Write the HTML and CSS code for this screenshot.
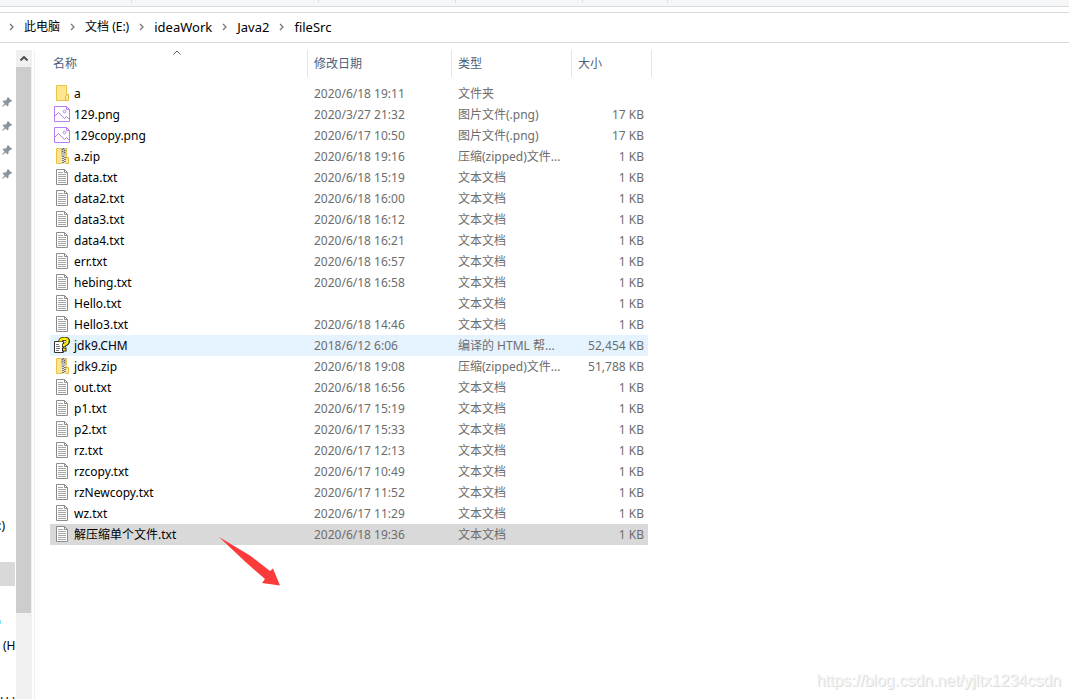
FILE: index.html
```html
<!DOCTYPE html>
<html lang="zh-CN">
<head>
<meta charset="utf-8">
<title>fileSrc</title>
<link rel="stylesheet" href="styles.css">
</head>
<body>
<svg class="defs" aria-hidden="true">
  <symbol id="i-folder" viewBox="0 0 16 16"><path d="M2.500 .5h10v15h-10z" fill="#ffe68f" stroke="#e8c24b"/><path d="M12.500 9.500h2v6h-3v-4z" fill="#ffe9a0" stroke="#e3b93c"/></symbol>
  <symbol id="i-png" viewBox="0 0 16 16"><path d="M.5 .5h12l3 3v12H.5z" fill="#fff" stroke="#b77df5"/><path d="M12.500 .5v3h3" fill="none" stroke="#b77df5"/><circle cx="10.500" cy="5.500" r="1.300" fill="none" stroke="#b77df5"/><path d="M.5 10.500l4-4 6 6 2-2 3 3" fill="none" stroke="#b77df5"/></symbol>
  <symbol id="i-zip" viewBox="0 0 16 16"><path d="M2.500 .5h10v15h-10z" fill="#ffe38a" stroke="#e8c24b"/><path d="M12.500 9.500h2v6h-3v-4z" fill="#ffe9a0" stroke="#e3b93c"/><path d="M7 0h5v6l-1 2H8L7 6z" fill="#b9bec2"/><path d="M9 0h1v1H9zM8 1h1v1H8zM10 2h1v1h-1zM8 3h1v1H8zM10 4h1v1h-1z" fill="#555"/><path d="M8 8h4v8H8z" fill="#e8e4d2"/><path d="M8 8h2v1H8zM10 9h2v1h-2zM8 10h2v1H8zM10 11h2v1h-2zM8 12h2v1H8zM10 13h2v1h-2zM8 14h2v1H8z" fill="#777"/></symbol>
  <symbol id="i-txt" viewBox="0 0 16 16"><path d="M2.500 .5h8l3 3v12h-11z" fill="#fff" stroke="#8c8c8c"/><path d="M10.500 .5v3h3" fill="none" stroke="#8c8c8c"/><path d="M4 3.500h5M4 5.500h8M4 7.500h8M4 9.500h8M4 11.500h8M4 13.500h8" stroke="#a6a6a6"/></symbol>
  <symbol id="i-chm" viewBox="0 0 16 16"><path d="M.5 4.500h9v11h-9z" fill="#fff" stroke="#333"/><path d="M2 7.500h3M2 9.500h4M2 11.500h4M2 13.500h3" stroke="#777"/><path d="M6.500 5V3.500Q7 1.800 10.500 1.800T14 4.500Q14 6.300 10 8v2" fill="none" stroke="#222" stroke-width="4"/><path d="M8 10.500h4.500v4H8z" fill="#222"/><path d="M6.500 4.500V3.500Q7 1.800 10.500 1.800T13.500 4.500Q13.500 6.300 10 8v1.500" fill="none" stroke="#ffef00" stroke-width="2.500"/><path d="M9 11.500h2.500v2H9z" fill="#ffef00"/></symbol>
  <symbol id="i-pin" viewBox="0 0 10 10"><path d="M6 0l4 4-1 1H8L6.500 6.500v2l-1 1L3.500 7.500.5 10 0 9.500 2.500 6.500.5 4.500l1-1h2L5 2V1z" fill="#8a959d"/></symbol>
  <symbol id="i-next" viewBox="0 0 5 8"><path d="M1 1l3 3-3 3" fill="none" stroke="#777" stroke-width="1.300"/></symbol>
  <symbol id="i-up" viewBox="0 0 8 5"><path d="M.5 4.500L4 1l3.500 3.500" fill="none" stroke="currentColor"/></symbol>
</svg>
<div class="columns-edge"><i class="c1"></i><i class="c2"></i><i class="c3"></i><i class="c4"></i><i class="c5"></i></div>
<nav class="address">
  <svg class="next"><use href="#i-next"/></svg><a href="#">此电脑</a>
  <svg class="next"><use href="#i-next"/></svg><a href="#">文档 (E:)</a>
  <svg class="next"><use href="#i-next"/></svg><a href="#" class="latin">ideaWork</a>
  <svg class="next"><use href="#i-next"/></svg><a href="#" class="latin">Java2</a>
  <svg class="next"><use href="#i-next"/></svg><a href="#" class="latin">fileSrc</a>
</nav>
<div class="main">
  <aside class="tree">
    <ul class="pins">
      <li><svg class="pin"><use href="#i-pin"/></svg></li>
      <li><svg class="pin"><use href="#i-pin"/></svg></li>
      <li><svg class="pin"><use href="#i-pin"/></svg></li>
      <li><svg class="pin"><use href="#i-pin"/></svg></li>
    </ul>
    <ul class="drives">
      <li class="tail colon">:)</li>
      <li></li>
      <li class="current"></li>
      <li></li>
      <li><i class="dot"></i></li>
      <li class="tail label">(H</li>
      <li></li>
      <li class="tail last">H:)</li>
    </ul>
  </aside>
  <div class="scrollbar"><button class="up" aria-label="向上滚动"><svg class="arrow"><use href="#i-up"/></svg></button><div class="thumb"></div></div>
  <main class="files">
    <table>
      <colgroup><col class="w-name"><col class="w-date"><col class="w-type"><col class="w-size"><col class="w-end"></colgroup>
      <thead><tr><th class="sorted">名称<svg class="sort"><use href="#i-up"/></svg></th><th>修改日期</th><th>类型</th><th colspan="2">大小</th></tr></thead>
      <tbody>
        <tr class="gap"><td colspan="5"></td></tr>
        <tr><td><span class="file"><svg><use href="#i-folder"/></svg>a</span></td><td>2020/6/18 19:11</td><td>文件夹</td><td></td></tr>
        <tr><td><span class="file"><svg><use href="#i-png"/></svg>129.png</span></td><td>2020/3/27 21:32</td><td>图片文件(.png)</td><td>17 KB</td></tr>
        <tr><td><span class="file"><svg><use href="#i-png"/></svg>129copy.png</span></td><td>2020/6/17 10:50</td><td>图片文件(.png)</td><td>17 KB</td></tr>
        <tr><td><span class="file"><svg><use href="#i-zip"/></svg>a.zip</span></td><td>2020/6/18 19:16</td><td>压缩(zipped)文件...</td><td>1 KB</td></tr>
        <tr><td><span class="file"><svg><use href="#i-txt"/></svg>data.txt</span></td><td>2020/6/18 15:19</td><td>文本文档</td><td>1 KB</td></tr>
        <tr><td><span class="file"><svg><use href="#i-txt"/></svg>data2.txt</span></td><td>2020/6/18 16:00</td><td>文本文档</td><td>1 KB</td></tr>
        <tr><td><span class="file"><svg><use href="#i-txt"/></svg>data3.txt</span></td><td>2020/6/18 16:12</td><td>文本文档</td><td>1 KB</td></tr>
        <tr><td><span class="file"><svg><use href="#i-txt"/></svg>data4.txt</span></td><td>2020/6/18 16:21</td><td>文本文档</td><td>1 KB</td></tr>
        <tr><td><span class="file"><svg><use href="#i-txt"/></svg>err.txt</span></td><td>2020/6/18 16:57</td><td>文本文档</td><td>1 KB</td></tr>
        <tr><td><span class="file"><svg><use href="#i-txt"/></svg>hebing.txt</span></td><td>2020/6/18 16:58</td><td>文本文档</td><td>1 KB</td></tr>
        <tr><td><span class="file"><svg><use href="#i-txt"/></svg>Hello.txt</span></td><td></td><td>文本文档</td><td>1 KB</td></tr>
        <tr><td><span class="file"><svg><use href="#i-txt"/></svg>Hello3.txt</span></td><td>2020/6/18 14:46</td><td>文本文档</td><td>1 KB</td></tr>
        <tr class="hover"><td><span class="file"><svg><use href="#i-chm"/></svg>jdk9.CHM</span></td><td>2018/6/12 6:06</td><td>编译的 HTML 帮...</td><td>52,454 KB</td></tr>
        <tr><td><span class="file"><svg><use href="#i-zip"/></svg>jdk9.zip</span></td><td>2020/6/18 19:08</td><td>压缩(zipped)文件...</td><td>51,788 KB</td></tr>
        <tr><td><span class="file"><svg><use href="#i-txt"/></svg>out.txt</span></td><td>2020/6/18 16:56</td><td>文本文档</td><td>1 KB</td></tr>
        <tr><td><span class="file"><svg><use href="#i-txt"/></svg>p1.txt</span></td><td>2020/6/17 15:19</td><td>文本文档</td><td>1 KB</td></tr>
        <tr><td><span class="file"><svg><use href="#i-txt"/></svg>p2.txt</span></td><td>2020/6/17 15:33</td><td>文本文档</td><td>1 KB</td></tr>
        <tr><td><span class="file"><svg><use href="#i-txt"/></svg>rz.txt</span></td><td>2020/6/17 12:13</td><td>文本文档</td><td>1 KB</td></tr>
        <tr><td><span class="file"><svg><use href="#i-txt"/></svg>rzcopy.txt</span></td><td>2020/6/17 10:49</td><td>文本文档</td><td>1 KB</td></tr>
        <tr><td><span class="file"><svg><use href="#i-txt"/></svg>rzNewcopy.txt</span></td><td>2020/6/17 11:52</td><td>文本文档</td><td>1 KB</td></tr>
        <tr><td><span class="file"><svg><use href="#i-txt"/></svg>wz.txt</span></td><td>2020/6/17 11:29</td><td>文本文档</td><td>1 KB</td></tr>
        <tr class="selected"><td><span class="file"><svg><use href="#i-txt"/></svg>解压缩单个文件.txt</span></td><td>2020/6/18 19:36</td><td>文本文档</td><td>1 KB</td></tr>
      </tbody>
    </table>
  </main>
</div>
<svg class="pointer" viewBox="0 0 62 50" aria-hidden="true"><path d="M0 0L31 18.500L51 34L54 31.500L61 48.500L43 46L46 42L26 24.500Z" fill="#fb3b39"/></svg>
<div class="watermark">https://blog.csdn.net/yjltx1234csdn</div>
</body>
</html>
```
FILE: styles.css
```css
* { box-sizing: border-box; }
body {
  margin: 0;
  height: 100vh;
  overflow: hidden;
  position: relative;
  display: flex;
  flex-direction: column;
  background: #fff;
  color: #000;
  font: 12px/20px "Noto Sans", "Noto Sans CJK SC", sans-serif;
}
ul { list-style: none; margin: 0; padding: 0; }
a { color: inherit; text-decoration: none; }
svg { display: block; flex: none; }
.defs { position: absolute; width: 0; height: 0; }

.columns-edge {
  display: flex;
  flex: none;
  height: 7px;
  background: #f5f6f7;
  border-bottom: 1px solid #dadada;
}
.columns-edge i { height: 3px; border-right: 1px solid #dfe0e1; }
.c1 { width: 132px; }
.c2 { width: 187px; }
.c3 { width: 137px; }
.c4 { width: 127px; }
.c5 { width: 85px; }

.address {
  flex: none;
  display: flex;
  align-items: center;
  gap: 10px;
  height: 31px;
  margin-top: 5px;
  padding: 0 0 2px 9px;
  border: solid #d9d9d9;
  border-width: 1px 0;
}
.latin { font-size: 13px; }
.next { width: 5px; height: 8px; }

.main { flex: 1; min-height: 0; display: flex; }
.tree { width: 16px; overflow: hidden; padding-top: 47px; }
.tree li { height: 24px; display: flex; align-items: center; }
.tree .pin { width: 10px; height: 10px; margin-left: 2px; }
.drives { margin-top: 328px; }
.drives .current { background: #d9d9d9; margin-right: 1px; }
.drives .colon { justify-content: flex-end; padding-right: 11px; }
.drives .label { padding-left: 3px; }
.drives .last { padding-top: 16px; }
.tail { white-space: nowrap; }
.dot { width: 1px; height: 4px; background: #7fe3fa; }

.scrollbar { width: 16px; margin-top: 7px; background: #f0f0f0; }
.up {
  width: 15px;
  height: 17px;
  padding: 0;
  border: 0;
  background: none;
  color: #505050;
  display: grid;
  place-items: center;
}
.arrow { width: 8px; height: 5px; stroke-width: 2; }
.thumb { width: 15px; height: 546px; background: #cdcdcd; }

.files { flex: 1; margin: 7px 0 0 2px; padding-left: 15px; border-left: 1px solid #f0f0f0; }
table { table-layout: fixed; width: 602px; border-collapse: separate; border-spacing: 0; }
.w-name { width: 258px; }
.w-date { width: 144px; }
.w-type { width: 120px; }
.w-size { width: 76px; }
.w-end { width: 4px; }
th {
  position: relative;
  height: 27px;
  padding: 0 0 0 6px;
  border-right: 1px solid #e5e5e5;
  color: #4c607a;
  font-weight: 400;
  text-align: left;
}
.sorted { padding-left: 3px; }
.sort { position: absolute; top: 0; left: 123px; width: 8px; height: 5px; color: #666; }
.gap td { height: 6px; }
td { height: 21px; padding: 0 0 0 6px; color: #6d6d6d; white-space: nowrap; }
td:first-child { padding-left: 4px; color: #000; }
td:nth-child(4) { padding: 0 4px 0 0; text-align: right; }
.file { display: flex; align-items: center; gap: 4px; }
.file svg { width: 16px; height: 16px; margin-bottom: 2px; }
.hover td { background: #e5f3ff; }
.selected td { background: #d9d9d9; }

.pointer { position: absolute; left: 219px; top: 537px; width: 62px; height: 50px; }
.watermark {
  position: absolute;
  right: 8px;
  bottom: 8px;
  color: #f4f4f4;
  font: 16px/20px "Liberation Sans", sans-serif;
  text-shadow: 1px 1px 0 #dcdcdc;
}
```
